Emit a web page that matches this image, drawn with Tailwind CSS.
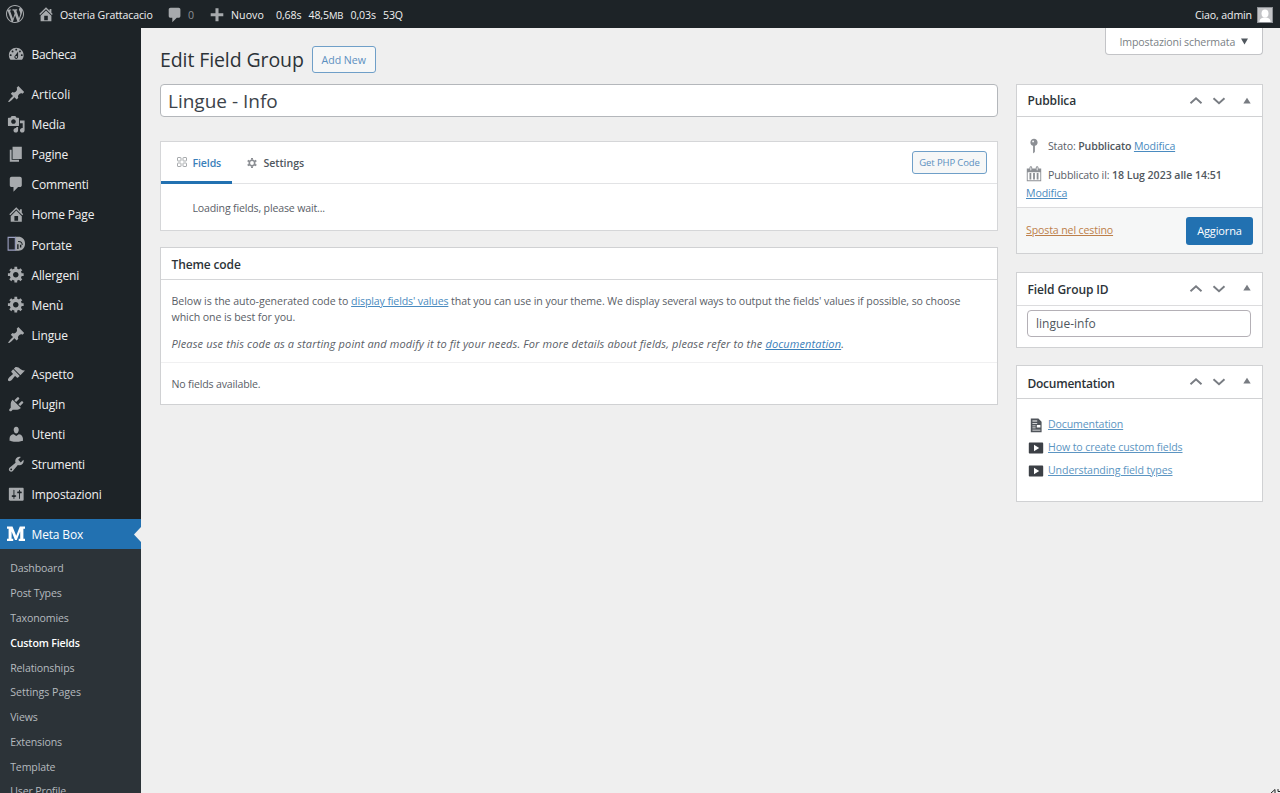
<!DOCTYPE html>
<html lang="it">
<head>
<meta charset="utf-8">
<title>Edit Field Group</title>
<script src="https://cdn.jsdelivr.net/npm/@tailwindcss/browser@4"></script>
</head>
<body class="h-[793px] overflow-hidden bg-[#efefef] font-['Open_Sans','Noto_Sans',sans-serif] text-[10.6px] tracking-[-0.13px] text-[#5a6067]">
<svg class="hidden">
  <symbol id="wp" viewBox="0 0 20 20"><path d="M20 10c0-5.51-4.49-10-10-10C4.48 0 0 4.49 0 10c0 5.52 4.48 10 10 10 5.51 0 10-4.48 10-10zM7.78 15.37L4.37 6.22c.55-.02 1.17-.08 1.17-.08.5-.06.44-1.13-.06-1.11 0 0-1.45.11-2.37.11-.18 0-.37 0-.58-.01C4.12 2.69 6.87 1.11 10 1.11c2.33 0 4.45.87 6.05 2.34-.68-.11-1.65.39-1.65 1.58 0 .74.45 1.36.9 2.1.35.61.55 1.36.55 2.46 0 1.49-1.4 5-1.4 5l-3.03-8.37c.54-.02.82-.17.82-.17.5-.05.44-1.25-.06-1.22 0 0-1.44.12-2.38.12-.87 0-2.33-.12-2.33-.12-.5-.03-.56 1.2-.06 1.22l.92.08 1.26 3.41zM17.41 10c.24-.64.74-1.87.43-4.25.7 1.29 1.05 2.71 1.05 4.25 0 3.29-1.73 6.24-4.4 7.78.97-2.59 1.94-5.2 2.92-7.78zM6.1 18.09C3.12 16.65 1.11 13.53 1.11 10c0-1.3.23-2.48.72-3.59C3.25 10.3 4.67 14.2 6.1 18.09zm4.03-6.63l2.58 6.98c-.86.29-1.76.45-2.71.45-.79 0-1.57-.11-2.29-.33.81-2.38 1.62-4.74 2.42-7.1z"/></symbol>
  <symbol id="home" viewBox="0 0 20 20"><path d="M16 8.5l1.53 1.53-1.06 1.06L10 4.6l-6.47 6.49-1.06-1.06L10 2.5l4 4v-2h2v4zm-6-2.46l6 5.99V18H4v-5.97zM12 17v-5H8v5h4z"/></symbol>
  <symbol id="comment" viewBox="0 0 20 20"><path d="M5 2h9c1.1 0 2 .9 2 2v7c0 1.1-.9 2-2 2h-2l-5 5v-5H5c-1.1 0-2-.9-2-2V4c0-1.1.9-2 2-2z"/></symbol>
  <symbol id="plus" viewBox="0 0 20 20"><path d="M17 8v3.4h-5.3V17H8.3v-5.6H3V8h5.3V2.5h3.4V8z"/></symbol>
  <symbol id="dash" viewBox="0 0 20 20"><path d="M3.76 16h12.48c1.1-1.37 1.76-3.11 1.76-5 0-4.42-3.58-8-8-8s-8 3.58-8 8c0 1.89.66 3.63 1.76 5zM10 4c.55 0 1 .45 1 1s-.45 1-1 1-1-.45-1-1 .45-1 1-1zM6 6c.55 0 1 .45 1 1s-.45 1-1 1-1-.45-1-1 .45-1 1-1zm8 0c.55 0 1 .45 1 1s-.45 1-1 1-1-.45-1-1 .45-1 1-1zm-5.37 5.55L12 7v6c0 1.1-.9 2-2 2s-2-.9-2-2c0-.57.24-1.08.63-1.45zM4 10c.55 0 1 .45 1 1s-.45 1-1 1-1-.45-1-1 .45-1 1-1zm12 0c.55 0 1 .45 1 1s-.45 1-1 1-1-.45-1-1 .45-1 1-1zm-5 3c0-.55-.45-1-1-1s-1 .45-1 1 .45 1 1 1 1-.45 1-1z"/></symbol>
  <symbol id="pin" viewBox="0 0 20 20"><path d="M10.44 3.02l1.82-1.82 6.36 6.35-1.83 1.82c-1.05-.68-2.48-.57-3.41.36l-.75.75c-.92.93-1.04 2.35-.35 3.41l-1.83 1.82-2.41-2.41-2.8 2.79c-.42.42-3.38 2.71-3.8 2.29s1.86-3.39 2.28-3.81l2.79-2.79L4.1 9.36l1.83-1.82c1.05.69 2.48.57 3.4-.36l.75-.75c.93-.92 1.05-2.35.36-3.41z"/></symbol>
  <symbol id="media" viewBox="0 0 20 20"><path d="M13 11V4c0-.55-.45-1-1-1h-1.67L9 1H5L3.67 3H2c-.55 0-1 .45-1 1v7c0 .55.45 1 1 1h10c.55 0 1-.45 1-1zM7 4.5c1.38 0 2.5 1.12 2.5 2.5S8.38 9.5 7 9.5 4.5 8.38 4.5 7 5.62 4.5 7 4.5zM14 6h5v10.5c0 1.38-1.12 2.5-2.5 2.5S14 17.88 14 16.5s1.12-2.5 2.5-2.5c.17 0 .34.02.5.05V9h-3V6zm-4 8.05V13h2v3.5c0 1.38-1.12 2.5-2.5 2.5S7 17.88 7 16.5 8.12 14 9.5 14c.17 0 .34.02.5.05z"/></symbol>
  <symbol id="page" viewBox="0 0 20 20"><path d="M6 15V2h10v13H6zm-1 1h8v2H3V5h2v11z"/></symbol>
  <symbol id="gear" viewBox="0 0 20 20"><path d="M18 12h-2.18c-.17.7-.44 1.35-.81 1.93l1.54 1.54-2.1 2.1-1.54-1.54c-.58.36-1.23.63-1.91.79V19H8v-2.18c-.68-.16-1.33-.43-1.91-.79l-1.54 1.54-2.12-2.12 1.54-1.54c-.36-.58-.63-1.23-.79-1.91H1V9.03h2.17c.16-.7.44-1.35.8-1.94L2.43 5.55l2.1-2.1 1.54 1.54c.58-.37 1.24-.64 1.93-.81V2h3v2.18c.68.16 1.33.43 1.91.79l1.54-1.54 2.12 2.12-1.54 1.54c.36.59.64 1.24.8 1.94H18V12zm-8.5 1.5c1.66 0 3-1.34 3-3s-1.34-3-3-3-3 1.34-3 3 1.34 3 3 3z"/></symbol>
  <symbol id="brush" viewBox="0 0 20 20"><path d="M14.48 11.06L7.41 3.99l1.5-1.5c.5-.56 2.3-.47 3.51.32 1.21.8 1.43 1.28 2.91 2.1 1.18.64 2.45 1.26 4.45.85zm-.71.71L6.7 4.7 4.93 6.47c-.39.39-.39 1.02 0 1.41l1.06 1.06c.39.39.39 1.03 0 1.42-.6.6-1.43 1.11-2.21 1.69-.35.26-.7.53-1.01.84C1.43 14.23.4 16.08 1.4 17.07c.99 1 2.84-.03 4.18-1.36.31-.31.58-.66.85-1.02.57-.78 1.08-1.61 1.69-2.21.39-.39 1.02-.39 1.41 0l1.06 1.06c.39.39 1.02.39 1.41 0z"/></symbol>
  <symbol id="plug" viewBox="0 0 20 20"><path d="M13.11 4.36L9.87 7.6 8 5.73l3.24-3.24c.35-.34 1.05-.2 1.56.32.52.51.66 1.21.31 1.55zm-8 1.77l.91-1.12 9.01 9.01-1.19.84c-.71.71-2.63 1.16-3.82 1.16H6.14L4.9 17.26c-.59.59-1.54.59-2.12 0-.59-.58-.59-1.53 0-2.12l1.24-1.24v-3.88c0-1.13.4-3.19 1.09-3.89zm7.26 3.97l3.24-3.24c.34-.35 1.04-.21 1.55.31.52.51.66 1.21.31 1.55l-3.24 3.25z"/></symbol>
  <symbol id="user" viewBox="0 0 20 20"><path d="M10 9.25c-2.27 0-2.73-3.44-2.73-3.44C7 4.02 7.82 2 9.97 2c2.16 0 2.98 2.02 2.71 3.81 0 0-.41 3.44-2.68 3.44zm0 2.57L12.72 10c2.39 0 4.52 2.33 4.52 4.53v2.49s-3.65 1.13-7.24 1.13c-3.65 0-7.24-1.13-7.24-1.13v-2.49c0-2.25 1.94-4.48 4.47-4.48z"/></symbol>
  <symbol id="wrench" viewBox="0 0 20 20"><path d="M16.68 9.77c-1.34 1.34-3.3 1.67-4.95.99l-5.41 6.52c-.99.99-2.59.99-3.58 0s-.99-2.59 0-3.57l6.52-5.42c-.68-1.65-.35-3.61.99-4.95 1.28-1.28 3.12-1.62 4.72-1.06l-2.89 2.89 2.82 2.82 2.86-2.87c.53 1.58.18 3.39-1.08 4.65zM3.81 16.21c.4.39 1.04.39 1.43 0 .4-.4.4-1.04 0-1.43-.39-.4-1.03-.4-1.43 0-.39.39-.39 1.03 0 1.43z"/></symbol>
  <symbol id="sliders" viewBox="0 0 20 20"><path d="M18 16V4c0-.55-.45-1-1-1H3c-.55 0-1 .45-1 1v12c0 .55.45 1 1 1h14c.55 0 1-.45 1-1zM8 11h1c.55 0 1 .45 1 1s-.45 1-1 1H8v1.5c0 .28-.22.5-.5.5s-.5-.22-.5-.5V13H6c-.55 0-1-.45-1-1s.45-1 1-1h1V5.500c0-.28.22-.5.5-.5s.5.22.5.5V11zm5-2h-1c-.55 0-1-.45-1-1s.45-1 1-1h1V5.500c0-.28.22-.5.5-.5s.5.22.5.5V7h1c.55 0 1 .45 1 1s-.45 1-1 1h-1v5.500c0 .28-.22.5-.5.5s-.5-.22-.5-.5V9z"/></symbol>
  <symbol id="key" viewBox="0 0 20 20"><path d="M14 6c0 1.860-1.280 3.410-3 3.860V16c0 1-2 2-2 2V9.860c-1.720-.45-3-2-3-3.860 0-2.210 1.790-4 4-4s4 1.790 4 4zM8 5c0 .55.45 1 1 1s1-.45 1-1-.45-1-1-1-1 .45-1 1z"/></symbol>
  <symbol id="cal" viewBox="0 0 20 20"><path d="M15 4h3v14H2V4h3V3c0-.83.67-1.500 1.500-1.500S8 2.170 8 3v1h4V3c0-.83.67-1.500 1.500-1.500S15 2.170 15 3v1zM6 3v2.500c0 .28.22.5.5.5s.5-.22.5-.5V3c0-.28-.22-.5-.5-.5S6 2.720 6 3zm7 0v2.500c0 .28.22.5.5.5s.5-.22.5-.5V3c0-.28-.22-.5-.5-.5s-.5.22-.5.5zm4 14V8H3v9h14zM7 16V9H5v7h2zm4 0V9H9v7h2zm4 0V9h-2v7h2z"/></symbol>
  <symbol id="video" viewBox="0 0 20 20"><path d="M19 15.500V4.500c0-.9-.5-1.500-1.500-1.500h-15C1.500 3 1 3.600 1 4.500v11c0 .9.500 1.500 1.500 1.500h15c1 0 1.500-.6 1.500-1.500zM7.500 14V6l6.500 4z"/></symbol>
  <symbol id="doc" viewBox="0 0 20 20"><path fill-rule="evenodd" d="M3.500 2H13l4 4v13H3.500zM5.500 4.500v1h6v-1zM5.500 7.500v1h6v-1zM5.500 10.500v1h4v-1zM11 10v3.200h4.500V10zM5.500 13v1h4v-1zM5.500 15.800v1h10v-1z"/></symbol>
  <symbol id="up" viewBox="0 0 14 14"><path d="M1.500 9.300 7 4.300 12.500 9.300" fill="none" stroke="#787c82" stroke-width="1.900"/></symbol>
  <symbol id="down" viewBox="0 0 14 14"><path d="M1.500 4.300 7 9.300l5.500-5" fill="none" stroke="#787c82" stroke-width="1.900"/></symbol>
  <symbol id="tri" viewBox="0 0 8 8"><path d="M4 .8 7.700 6.500H.3z" fill="#787c82"/></symbol>
</svg>

<header class="flex h-7 items-center bg-[#1d2327] pt-[3px] text-[#f0f0f1]">
  <svg class="-mt-[3px] ml-[6px] size-[18px] fill-[#a7aaad]"><use href="#wp"/></svg>
  <svg class="-mt-[3px] ml-[13px] size-[18px] fill-[#a7aaad]"><use href="#home"/></svg>
  <span class="ml-[5px] w-[106px]">Osteria Grattacacio</span>
  <svg class="-mt-[1px] size-[18px] fill-[#a7aaad]"><use href="#comment"/></svg>
  <span class="ml-[4px] w-[20px] text-[#8c9196]">0</span>
  <svg class="-mt-[2px] size-[18px] fill-[#a7aaad]"><use href="#plus"/></svg>
  <span class="ml-[5px] w-[45px] tracking-[0.08px]">Nuovo</span>
  <span class="w-[32.500px]">0,68s</span>
  <span class="w-[42px]">48,5<span class="text-[9.500px]">MB</span></span>
  <span class="w-[32.500px]">0,03s</span>
  <span>53Q</span>
  <span class="ml-auto">Ciao, admin</span>
  <span class="-mt-[2px] mr-[7px] ml-[5px] flex size-4 items-end justify-center border border-[#8c8f94] bg-[#c3c4c7]"><svg class="size-[14px] fill-white" viewBox="0 0 14 14"><ellipse cx="7" cy="5.500" rx="3.500" ry="4"/><path d="M1.500 14c0-3.500 2.500-4.500 5.500-4.500s5.500 1 5.500 4.500z"/></svg></span>
</header>

<div class="flex h-[765px]">
  <nav class="w-[141px] shrink-0 bg-[#1d2327] pt-[11px] text-[12px] tracking-[-0.15px] text-[#f0f0f1]">
    <a class="mb-[10px] flex h-[30px] items-center pt-[2px]"><svg class="-mt-[2px] mr-[6.500px] ml-[6.500px] size-[18.500px] fill-[#a7aaad]"><use href="#dash"/></svg><span class="tracking-[-0.3px]">Bacheca</span></a>
    <a class="flex h-[30.1px] items-center pt-[2px]"><svg class="-mt-[2px] mr-[6.500px] ml-[6.500px] size-[18.500px] fill-[#a7aaad]"><use href="#pin"/></svg><span class="tracking-normal">Articoli</span></a>
    <a class="flex h-[30.1px] items-center pt-[2px]"><svg class="-mt-[2px] mr-[6.500px] ml-[6.500px] size-[18.500px] fill-[#a7aaad]"><use href="#media"/></svg>Media</a>
    <a class="flex h-[30.1px] items-center pt-[2px]"><svg class="-mt-[2px] mr-[6.500px] ml-[6.500px] size-[18.500px] fill-[#a7aaad]"><use href="#page"/></svg>Pagine</a>
    <a class="flex h-[30.1px] items-center pt-[2px]"><svg class="-mt-[2px] mr-[6.500px] ml-[6.500px] size-[18.500px] fill-[#a7aaad]"><use href="#comment"/></svg>Commenti</a>
    <a class="flex h-[30.1px] items-center pt-[2px]"><svg class="-mt-[2px] mr-[6.500px] ml-[6.500px] size-[18.500px] fill-[#a7aaad]"><use href="#home"/></svg>Home Page</a>
    <a class="flex h-[30.1px] items-center pt-[2px]"><svg class="-mt-[2px] mr-[6.500px] ml-[6.500px] size-[18.500px] fill-[#a7aaad]" viewBox="0 0 20 20"><path fill-rule="evenodd" d="M9 2h3.500c4 0 7 3 7 7.500s-3 7.500-7 7.500H9zM12 6.500v1.200c2.500-.3 4 1 4 3h1c0-3-2-4.500-5-4.200zM11 10v5h1.500v-5zM14 10.500v3h1.500v-3z"/><path d="M1.200 2.600h7.800v13.800H1.200z" fill="#23272e" stroke="#9a9fc0" stroke-width="1.200"/></svg>Portate</a>
    <a class="flex h-[30.1px] items-center pt-[2px]"><svg class="-mt-[2px] mr-[6.500px] ml-[6.500px] size-[18.500px] fill-[#a7aaad]"><use href="#gear"/></svg>Allergeni</a>
    <a class="flex h-[30.1px] items-center pt-[2px]"><svg class="-mt-[2px] mr-[6.500px] ml-[6.500px] size-[18.500px] fill-[#a7aaad]"><use href="#gear"/></svg>Menù</a>
    <a class="mb-[9.500px] flex h-[30.1px] items-center pt-[2px]"><svg class="-mt-[2px] mr-[6.500px] ml-[6.500px] size-[18.500px] fill-[#a7aaad]"><use href="#pin"/></svg>Lingue</a>
    <a class="flex h-[30.1px] items-center pt-[2px]"><svg class="-mt-[2px] mr-[6.500px] ml-[6.500px] size-[18.500px] fill-[#a7aaad]"><use href="#brush"/></svg>Aspetto</a>
    <a class="flex h-[30.1px] items-center pt-[2px]"><svg class="-mt-[2px] mr-[6.500px] ml-[6.500px] size-[18.500px] fill-[#a7aaad]"><use href="#plug"/></svg>Plugin</a>
    <a class="flex h-[30.1px] items-center pt-[1px]"><svg class="-mt-[2px] mr-[6.500px] ml-[6.500px] size-[18.500px] fill-[#a7aaad]"><use href="#user"/></svg>Utenti</a>
    <a class="flex h-[30.1px] items-center pt-[1px]"><svg class="-mt-[2px] mr-[6.500px] ml-[6.500px] size-[18.500px] fill-[#a7aaad]"><use href="#wrench"/></svg><span class="tracking-[-0.25px]">Strumenti</span></a>
    <a class="mb-[9.500px] flex h-[30.1px] items-center pt-[1px]"><svg class="-mt-[2px] mr-[6.500px] ml-[6.500px] size-[18.500px] fill-[#a7aaad]"><use href="#sliders"/></svg>Impostazioni</a>
    <a class="flex h-[30px] items-center bg-[#2271b1] pt-[2px] text-white"><svg class="-mt-[3px] mr-[5.500px] ml-[6px] size-5 fill-white" viewBox="0 0 20 20"><path d="M1 2.500h5.500l3.700 9.300 3.600-9.300H19v2.300h-1.600v10H19V17h-6.300v-2.200h1.500V7.500L10.800 16H9L5.600 7.500v7.300h1.600V17H1v-2.200h1.600v-10H1z"/></svg>Meta Box<svg class="-mt-[2px] ml-auto h-[15px] w-[7px] fill-[#efefef]" viewBox="0 0 7 15"><path d="M7 0v15L0 7.500z"/></svg></a>
    <div class="h-[244px] overflow-hidden bg-[#2c3338] pt-[7px] pl-[10.200px] text-[10.600px] leading-[24.800px] text-[#b5babf]">
      <div>Dashboard</div><div>Post Types</div><div>Taxonomies</div>
      <div class="font-semibold text-white">Custom Fields</div>
      <div>Relationships</div><div class="tracking-[-0.02px]">Settings Pages</div><div>Views</div><div>Extensions</div><div>Template</div><div>User Profile</div>
    </div>
  </nav>

  <main class="relative flex-1 pl-[19px]">
    <div class="absolute top-0 right-[17px] flex h-[27px] w-[158px] items-center rounded-b border border-t-0 border-[#c3c4c7] bg-white pt-[3px] pl-[13.500px] text-[#7a7f85]"><span class="w-[121px]">Impostazioni schermata</span><svg class="-mt-[3px] size-[7px] fill-[#50575e]" viewBox="0 0 8 8"><path d="M0 .5h8L4 7.500z"/></svg></div>

    <div class="flex h-[56px] items-center pt-[6px]">
      <h1 class="pt-[1px] text-[19.500px] tracking-[-0.1px] text-[#2c3338]">Edit Field Group</h1>
      <a class="ml-2 flex h-[27px] w-[64px] items-center justify-center rounded-[3px] border border-[#6f9fc8] bg-[#f6f7f7] pt-[3px] tracking-normal text-[#5c90bf]">Add New</a>
    </div>

    <div class="flex gap-[18px]">
      <div class="w-[838px]">
        <div class="flex h-[33px] items-center rounded border border-[#b4b7bb] bg-white pt-[2px] pl-[7px] text-[19px] tracking-normal text-[#3c434a]">Lingue - Info</div>

        <section class="mt-6 h-[90px] border border-[#d5d6d8] bg-white">
          <div class="flex h-[42px] border-b border-[#e2e3e5]">
            <div class="flex h-[42px] w-[71px] items-center border-b-[3px] border-[#2271b1] pt-[5px] pl-4 font-semibold text-[#3a80ba]"><svg class="-mt-[4px] mr-[5.500px] size-[10px]" viewBox="0 0 10 10" fill="none" stroke="#a7aaad"><rect x=".5" y=".5" width="3.500" height="3.500" rx=".5"/><rect x="6" y=".5" width="3.500" height="3.500" rx=".5"/><rect x=".5" y="6" width="3.500" height="3.500" rx=".5"/><rect x="6" y="6" width="3.500" height="3.500" rx=".5"/></svg>Fields</div>
            <div class="flex h-[42px] items-center pt-[2px] pl-[15px] font-semibold text-[#50575e] tracking-[-0.05px]"><svg class="-mt-[3px] mr-[6.500px] size-[10px]" viewBox="0 0 10 10"><circle cx="5" cy="5" r="2.700" fill="none" stroke="#8c8f94" stroke-width="1.600"/><path d="M5 0v1.700M5 8.300V10M.7 2.500l1.400.8M7.900 6.700l1.400.8M.7 7.500l1.400-.8M7.900 3.300l1.400-.8" stroke="#8c8f94" stroke-width="2"/></svg>Settings</div>
            <a class="mt-[9px] mr-[10px] ml-auto flex h-[23px] w-[75px] items-center justify-center rounded-[3px] border border-[#6f9fc8] bg-[#f6f7f7] pt-[2px] text-[9.500px] text-[#5c90bf]">Get PHP Code</a>
          </div>
          <p class="pt-[16px] pl-[31.500px] leading-4 tracking-[-0.17px]">Loading fields, please wait...</p>
        </section>

        <section class="mt-4 h-[158px] border border-[#d0d1d3] bg-white">
          <h2 class="flex h-8 items-center border-b border-[#d5d6d8] pt-[3px] pl-[10.500px] text-[12px] font-semibold text-[#2c3338]">Theme code</h2>
          <div class="h-[83px] border-b border-[#f0f0f1] pt-[13px] pl-[10.500px] leading-4">
            <p class="tracking-[-0.08px]"><span class="tracking-[-0.04px]">Below is the auto-generated code to </span><a class="text-[#4a8bc0] underline tracking-[-0.13px]">display fields' values</a> that you can use in your theme. We display several ways to output the fields' values if possible, so choose<br>which one is best for you.</p>
            <p class="mt-[11px] text-[11px] tracking-[0.13px] italic">Please use this code as a starting point and modify it to fit your needs. For more details about fields, please refer to the <a class="text-[#3a80ba] underline">documentation</a>.</p>
          </div>
          <p class="pt-[13px] pl-[10.500px] leading-4 tracking-[-0.18px]">No fields available.</p>
        </section>
      </div>

      <aside class="w-[247px]">
        <section class="h-[170px] border border-[#d0d1d3] bg-white">
          <h2 class="flex h-8 items-center border-b border-[#d0d1d3] pl-[10.500px] text-[12px] font-semibold text-[#2c3338]"><span class="pt-[1px]">Pubblica</span><svg class="ml-auto size-[14px]"><use href="#up"/></svg><svg class="ml-[9px] size-[14px]"><use href="#down"/></svg><svg class="mr-[11.500px] ml-[16.500px] size-[8px]"><use href="#tri"/></svg></h2>
          <div class="h-[90px] pt-[18px] pl-[9px]">
            <div class="flex h-[22px] items-center"><svg class="-mt-[1px] mr-[4px] -ml-[1px] size-[18px] fill-[#8c8f94]"><use href="#key"/></svg><span class="pt-[1px]">&#8202;Stato: <b class="font-semibold text-[#50575e]">Pubblicato</b> <a class="text-[#4a8bc0] underline">Modifica</a></span></div>
            <div class="mt-[6px] flex h-[22px] items-center"><svg class="mr-[5px] -ml-[1px] size-[18px] fill-[#8c8f94]"><use href="#cal"/></svg><span class="pt-[3px]">Pubblicato il: <b class="font-semibold tracking-[-0.05px] text-[#50575e]">18 Lug 2023 alle 14:51</b></span></div>
            <a class="block leading-4 text-[#4a8bc0] underline">Modifica</a>
          </div>
          <div class="flex h-[46px] items-center justify-between border-t border-[#dcdcde] bg-[#f6f7f7] pr-[9px] pl-[9px]"><a class="text-[#bd7f4a] underline">Sposta nel cestino</a><a class="flex h-7 w-[67px] items-center justify-center rounded-[3px] bg-[#2271b1] pt-[1px] text-[11px] text-white">Aggiorna</a></div>
        </section>
        <section class="mt-[18px] h-[76px] border border-[#d0d1d3] bg-white">
          <h2 class="flex h-[33px] items-center border-b border-[#dcdcde] pl-[10.500px] text-[12px] font-semibold text-[#2c3338]"><span class="pt-[2px] tracking-[-0.1px]">Field Group ID</span><svg class="ml-auto size-[14px]"><use href="#up"/></svg><svg class="ml-[9px] size-[14px]"><use href="#down"/></svg><svg class="-mt-[2px] mr-[11.500px] ml-[16.500px] size-[8px]"><use href="#tri"/></svg></h2>
          <div class="mt-1 mr-[11px] ml-[10px] flex h-[27px] items-center rounded border border-[#b4b0b6] pt-[1px] pl-2 text-[12px] tracking-[0.02px] text-[#50575e]">lingue-info</div>
        </section>
        <section class="mt-[17px] h-[137px] border border-[#d0d1d3] bg-white">
          <h2 class="flex h-[33px] items-center border-b border-[#d0d1d3] pl-[10.500px] text-[12px] font-semibold text-[#2c3338]"><span class="pt-[3px] tracking-[-0.25px]">Documentation</span><svg class="ml-auto size-[14px]"><use href="#up"/></svg><svg class="ml-[9px] size-[14px]"><use href="#down"/></svg><svg class="-mt-[2px] mr-[11.500px] ml-[16.500px] size-[8px]"><use href="#tri"/></svg></h2>
          <div class="pt-[14px] pl-[11px]">
            <div class="flex h-[23px] items-center"><svg class="mr-[4px] size-[16px] fill-[#50555b]"><use href="#doc"/></svg><a class="text-[#5c95c2] underline">Documentation</a></div>
            <div class="flex h-[23px] items-center"><svg class="mr-[4px] size-[16px] fill-[#3c4046]"><use href="#video"/></svg><a class="text-[#5c95c2] underline tracking-[-0.11px]">How to create custom fields</a></div>
            <div class="flex h-[23px] items-center"><svg class="mr-[4px] size-[16px] fill-[#3c4046]"><use href="#video"/></svg><a class="text-[#5c95c2] underline tracking-[-0.1px]">Understanding field types</a></div>
          </div>
        </section>
      </aside>
    </div>
    <svg class="absolute right-0 bottom-0 h-1 w-[10px]" viewBox="0 0 10 4"><path d="M1 4 5 .5V4M8 0v2.500h2" fill="none" stroke="#222"/></svg>
  </main>
</div>
</body>
</html>
